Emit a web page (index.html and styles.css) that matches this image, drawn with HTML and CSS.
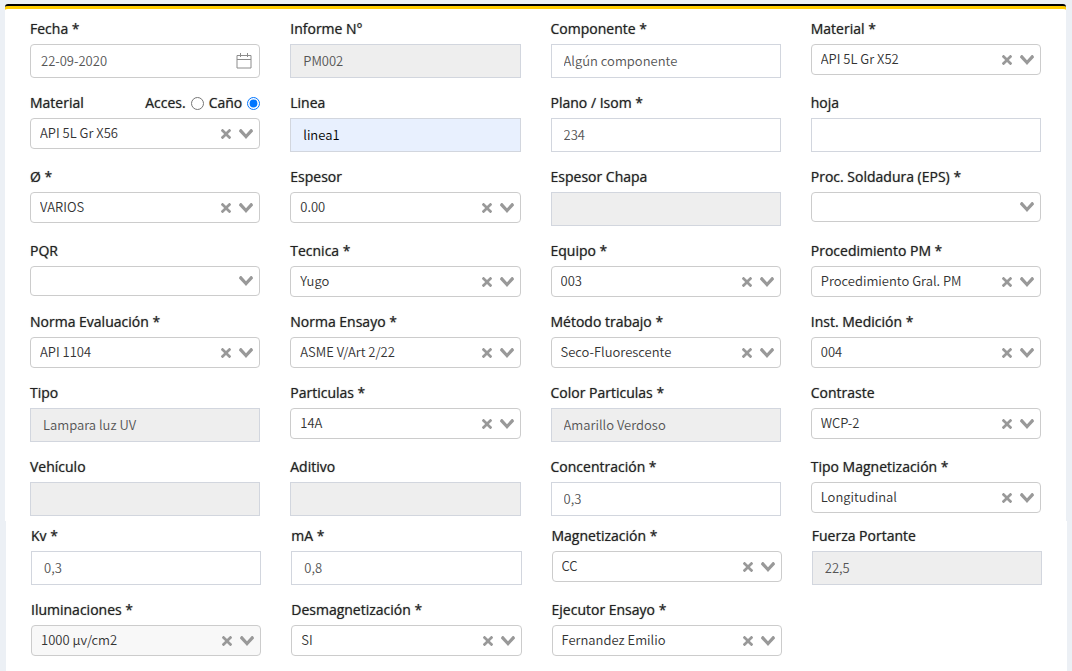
FILE: index.html
```
<!DOCTYPE html>
<html lang="es">
<head>
<meta charset="utf-8">
<meta name="viewport" content="width=device-width, initial-scale=1">
<title>Informe PM</title>
<link rel="stylesheet" href="styles.css">
</head>
<body>
<svg class="sprite" aria-hidden="true">
  <symbol id="clear" viewBox="0 0 10 10"><path d="M6.895455 5l2.842897-2.842898c.348864-.348863.348864-.914488 0-1.263636L9.106534.261648c-.348864-.348864-.914489-.348864-1.263636 0L5 3.104545 2.157102.261648c-.348863-.348864-.914488-.348864-1.263636 0L.261648.893466c-.348864.348864-.348864.914489 0 1.263636L3.104545 5 .261648 7.842898c-.348864.348863-.348864.914488 0 1.263636l.631818.631818c.348864.348864.914489.348864 1.263636 0L5 6.895455l2.842898 2.842897c.348863.348864.914488.348864 1.263636 0l.631818-.631818c.348864-.348864.348864-.914489 0-1.263636L6.895455 5z"/></symbol>
  <symbol id="chevron" viewBox="0 0 14 10"><path d="M9.211364 7.59931l4.48338-4.867229c.407008-.441854.407008-1.158247 0-1.60046l-.73712-.80023c-.407008-.441854-1.066904-.441854-1.474243 0L7 5.198617 2.51662.33139c-.407008-.441853-1.066904-.441853-1.474243 0l-.737121.80023c-.407008.441854-.407008 1.158248 0 1.600461l4.48338 4.867228L7 10l2.211364-2.40069z"/></symbol>
  <symbol id="calendar" viewBox="0 0 16 16"><path d="M1 2.500H15V15H1ZM1 6.500H15M4.500 0V4M11.500 0V4" fill="none" stroke="#8c8c8c"/></symbol>
</svg>
<form class="form">
  <section class="panel panel-main">
    <div class="field">
      <label class="label" for="fecha">Fecha *</label>
      <div class="date"><input class="date-input" id="fecha" type="text" value="22-09-2020"><button class="icon-button" type="button" aria-label="Abrir calendario"><svg class="calendar"><use href="#calendar"/></svg></button></div>
    </div>
    <div class="field">
      <label class="label" for="informe">Informe N°</label>
      <input class="input" id="informe" type="text" value="PM002" disabled>
    </div>
    <div class="field">
      <label class="label" for="componente">Componente *</label>
      <input class="input" id="componente" type="text" value="Algún componente">
    </div>
    <div class="field">
      <label class="label" for="material">Material *</label>
      <div class="select"><select id="material"><option>API 5L Gr X52</option></select><button class="icon-button" type="button" aria-label="Limpiar"><svg class="clear"><use href="#clear"/></svg></button><svg class="chevron"><use href="#chevron"/></svg></div>
    </div>

    <div class="field">
      <div class="label-row">
        <label class="label" for="material2">Material</label>
        <div class="radios">
          <label class="label" for="acces">Acces.</label><input class="radio" id="acces" type="radio" name="tipo-material">
          <label class="label" for="cano">Caño</label><input class="radio" id="cano" type="radio" name="tipo-material" checked>
        </div>
      </div>
      <div class="select"><select id="material2"><option>API 5L Gr X56</option></select><button class="icon-button" type="button" aria-label="Limpiar"><svg class="clear"><use href="#clear"/></svg></button><svg class="chevron"><use href="#chevron"/></svg></div>
    </div>
    <div class="field">
      <label class="label" for="linea">Linea</label>
      <input class="input input-filled" id="linea" type="text" value="linea1">
    </div>
    <div class="field">
      <label class="label" for="plano">Plano / Isom *</label>
      <input class="input" id="plano" type="text" value="234">
    </div>
    <div class="field">
      <label class="label" for="hoja">hoja</label>
      <input class="input" id="hoja" type="text">
    </div>

    <div class="field">
      <label class="label" for="diametro">Ø *</label>
      <div class="select"><select id="diametro"><option>VARIOS</option></select><button class="icon-button" type="button" aria-label="Limpiar"><svg class="clear"><use href="#clear"/></svg></button><svg class="chevron"><use href="#chevron"/></svg></div>
    </div>
    <div class="field">
      <label class="label" for="espesor">Espesor</label>
      <div class="select"><select id="espesor"><option>0.00</option></select><button class="icon-button" type="button" aria-label="Limpiar"><svg class="clear"><use href="#clear"/></svg></button><svg class="chevron"><use href="#chevron"/></svg></div>
    </div>
    <div class="field">
      <label class="label" for="chapa">Espesor Chapa</label>
      <input class="input" id="chapa" type="text" disabled>
    </div>
    <div class="field">
      <label class="label" for="eps">Proc. Soldadura (EPS) *</label>
      <div class="select select-empty"><select id="eps"><option></option></select><svg class="chevron"><use href="#chevron"/></svg></div>
    </div>

    <div class="field">
      <label class="label" for="pqr">PQR</label>
      <div class="select select-empty"><select id="pqr"><option></option></select><svg class="chevron"><use href="#chevron"/></svg></div>
    </div>
    <div class="field">
      <label class="label" for="tecnica">Tecnica *</label>
      <div class="select"><select id="tecnica"><option>Yugo</option></select><button class="icon-button" type="button" aria-label="Limpiar"><svg class="clear"><use href="#clear"/></svg></button><svg class="chevron"><use href="#chevron"/></svg></div>
    </div>
    <div class="field">
      <label class="label" for="equipo">Equipo *</label>
      <div class="select"><select id="equipo"><option>003</option></select><button class="icon-button" type="button" aria-label="Limpiar"><svg class="clear"><use href="#clear"/></svg></button><svg class="chevron"><use href="#chevron"/></svg></div>
    </div>
    <div class="field">
      <label class="label" for="procedimiento">Procedimiento PM *</label>
      <div class="select"><select id="procedimiento"><option>Procedimiento Gral. PM</option></select><button class="icon-button" type="button" aria-label="Limpiar"><svg class="clear"><use href="#clear"/></svg></button><svg class="chevron"><use href="#chevron"/></svg></div>
    </div>

    <div class="field">
      <label class="label" for="evaluacion">Norma Evaluación *</label>
      <div class="select"><select id="evaluacion"><option>API 1104</option></select><button class="icon-button" type="button" aria-label="Limpiar"><svg class="clear"><use href="#clear"/></svg></button><svg class="chevron"><use href="#chevron"/></svg></div>
    </div>
    <div class="field">
      <label class="label" for="ensayo">Norma Ensayo *</label>
      <div class="select"><select id="ensayo"><option>ASME V/Art 2/22</option></select><button class="icon-button" type="button" aria-label="Limpiar"><svg class="clear"><use href="#clear"/></svg></button><svg class="chevron"><use href="#chevron"/></svg></div>
    </div>
    <div class="field">
      <label class="label" for="metodo">Método trabajo *</label>
      <div class="select"><select id="metodo"><option>Seco-Fluorescente</option></select><button class="icon-button" type="button" aria-label="Limpiar"><svg class="clear"><use href="#clear"/></svg></button><svg class="chevron"><use href="#chevron"/></svg></div>
    </div>
    <div class="field">
      <label class="label" for="medicion">Inst. Medición *</label>
      <div class="select"><select id="medicion"><option>004</option></select><button class="icon-button" type="button" aria-label="Limpiar"><svg class="clear"><use href="#clear"/></svg></button><svg class="chevron"><use href="#chevron"/></svg></div>
    </div>

    <div class="field">
      <label class="label" for="tipo">Tipo</label>
      <input class="input" id="tipo" type="text" value="Lampara luz UV" disabled>
    </div>
    <div class="field">
      <label class="label" for="particulas">Particulas *</label>
      <div class="select"><select id="particulas"><option>14A</option></select><button class="icon-button" type="button" aria-label="Limpiar"><svg class="clear"><use href="#clear"/></svg></button><svg class="chevron"><use href="#chevron"/></svg></div>
    </div>
    <div class="field">
      <label class="label" for="color">Color Particulas *</label>
      <input class="input" id="color" type="text" value="Amarillo Verdoso" disabled>
    </div>
    <div class="field">
      <label class="label" for="contraste">Contraste</label>
      <div class="select"><select id="contraste"><option>WCP-2</option></select><button class="icon-button" type="button" aria-label="Limpiar"><svg class="clear"><use href="#clear"/></svg></button><svg class="chevron"><use href="#chevron"/></svg></div>
    </div>

    <div class="field">
      <label class="label" for="vehiculo">Vehículo</label>
      <input class="input" id="vehiculo" type="text" disabled>
    </div>
    <div class="field">
      <label class="label" for="aditivo">Aditivo</label>
      <input class="input" id="aditivo" type="text" disabled>
    </div>
    <div class="field">
      <label class="label" for="concentracion">Concentración *</label>
      <input class="input" id="concentracion" type="text" value="0,3">
    </div>
    <div class="field">
      <label class="label" for="tipomag">Tipo Magnetización *</label>
      <div class="select"><select id="tipomag"><option>Longitudinal</option></select><button class="icon-button" type="button" aria-label="Limpiar"><svg class="clear"><use href="#clear"/></svg></button><svg class="chevron"><use href="#chevron"/></svg></div>
    </div>
  </section>

  <section class="panel panel-more">
    <div class="field">
      <label class="label" for="kv">Kv *</label>
      <input class="input" id="kv" type="text" value="0,3">
    </div>
    <div class="field">
      <label class="label" for="ma">mA *</label>
      <input class="input" id="ma" type="text" value="0,8">
    </div>
    <div class="field">
      <label class="label" for="magnetizacion">Magnetización *</label>
      <div class="select"><select id="magnetizacion"><option>CC</option></select><button class="icon-button" type="button" aria-label="Limpiar"><svg class="clear"><use href="#clear"/></svg></button><svg class="chevron"><use href="#chevron"/></svg></div>
    </div>
    <div class="field">
      <label class="label" for="fuerza">Fuerza Portante</label>
      <input class="input" id="fuerza" type="text" value="22,5" disabled>
    </div>

    <div class="field">
      <label class="label" for="iluminaciones">Iluminaciones *</label>
      <div class="select select-muted"><select id="iluminaciones"><option>1000 μv/cm2</option></select><button class="icon-button" type="button" aria-label="Limpiar"><svg class="clear"><use href="#clear"/></svg></button><svg class="chevron"><use href="#chevron"/></svg></div>
    </div>
    <div class="field">
      <label class="label" for="desmag">Desmagnetización *</label>
      <div class="select"><select id="desmag"><option>SI</option></select><button class="icon-button" type="button" aria-label="Limpiar"><svg class="clear"><use href="#clear"/></svg></button><svg class="chevron"><use href="#chevron"/></svg></div>
    </div>
    <div class="field">
      <label class="label" for="ejecutor">Ejecutor Ensayo *</label>
      <div class="select"><select id="ejecutor"><option>Fernandez Emilio</option></select><button class="icon-button" type="button" aria-label="Limpiar"><svg class="clear"><use href="#clear"/></svg></button><svg class="chevron"><use href="#chevron"/></svg></div>
    </div>
  </section>
</form>
</body>
</html>
```
FILE: styles.css
```
* { box-sizing: border-box; }

body {
  margin: 0;
  background: #ecf0f5;
  color: #222;
  font-family: "Open Sans", "Noto Sans", sans-serif;
  font-size: 14px;
  line-height: 20px;
}

.sprite { display: none; }

.form {
  display: flex;
  flex-direction: column;
  min-height: 100vh;
  padding-top: 4px;
}

.panel {
  display: grid;
  grid-template-columns: repeat(4, minmax(0, 1fr));
  align-content: start;
  gap: 15px 30px;
  background: #fff;
}

.panel-main {
  margin: 0 6px 0 5px;
  padding: 13px 25px 5px;
  border-top: 2px solid #000;
  border-radius: 3px 3px 0 0;
  box-shadow: inset 0 3px 0 #fc0;
}

.panel-more {
  flex: 1;
  margin: 0 5px 0 6px;
  padding: 5px 25px 15px;
}

.label {
  display: block;
  height: 20px;
  font-weight: 500;
  text-shadow: 0 0 1px rgba(34, 34, 34, 0.6);
}

.field > .label,
.label-row { margin-bottom: 5px; }

.label-row,
.radios {
  display: flex;
  align-items: center;
  justify-content: space-between;
}

.radios { gap: 5px; }

.radio {
  width: 13px;
  height: 13px;
  margin: 0;
}

.input,
.date-input,
.select select {
  font-family: "Noto Sans CJK SC", "Noto Sans", sans-serif;
  font-size: 13px;
  font-weight: 350;
  line-height: 20px;
}

.input {
  display: block;
  width: 100%;
  height: 34px;
  padding: 5px 12px 7px;
  border: 1px solid #d2d6de;
  border-radius: 0;
  background: #fff;
  color: #555;
}

.input:disabled { background: #eee; }

.input-filled {
  background: #e8f0fe;
  color: #000;
}

.date,
.select {
  display: flex;
  align-items: center;
  border: 1px solid #ccc;
  border-radius: 4px;
  background: #fff;
}

.date {
  height: 34px;
  padding-right: 7px;
}

.date-input {
  flex: 1;
  min-width: 0;
  padding: 0 10px;
  border: 0;
  background: none;
  color: #555;
}

.select {
  height: 31px;
  gap: 8px;
  padding-right: 6px;
}

.select-empty { height: 30px; }

.select-muted { background: #f8f8f8; }

.select select {
  flex: 1;
  min-width: 0;
  height: 100%;
  padding: 0 0 2px 9px;
  border: 0;
  appearance: none;
  background: none;
  color: #333;
}

.icon-button {
  display: flex;
  padding: 0;
  border: 0;
  background: none;
}

.clear {
  width: 10px;
  height: 10px;
  fill: #999;
}

.chevron {
  width: 14px;
  height: 10px;
  fill: #999;
}

.calendar {
  width: 16px;
  height: 16px;
}
```
